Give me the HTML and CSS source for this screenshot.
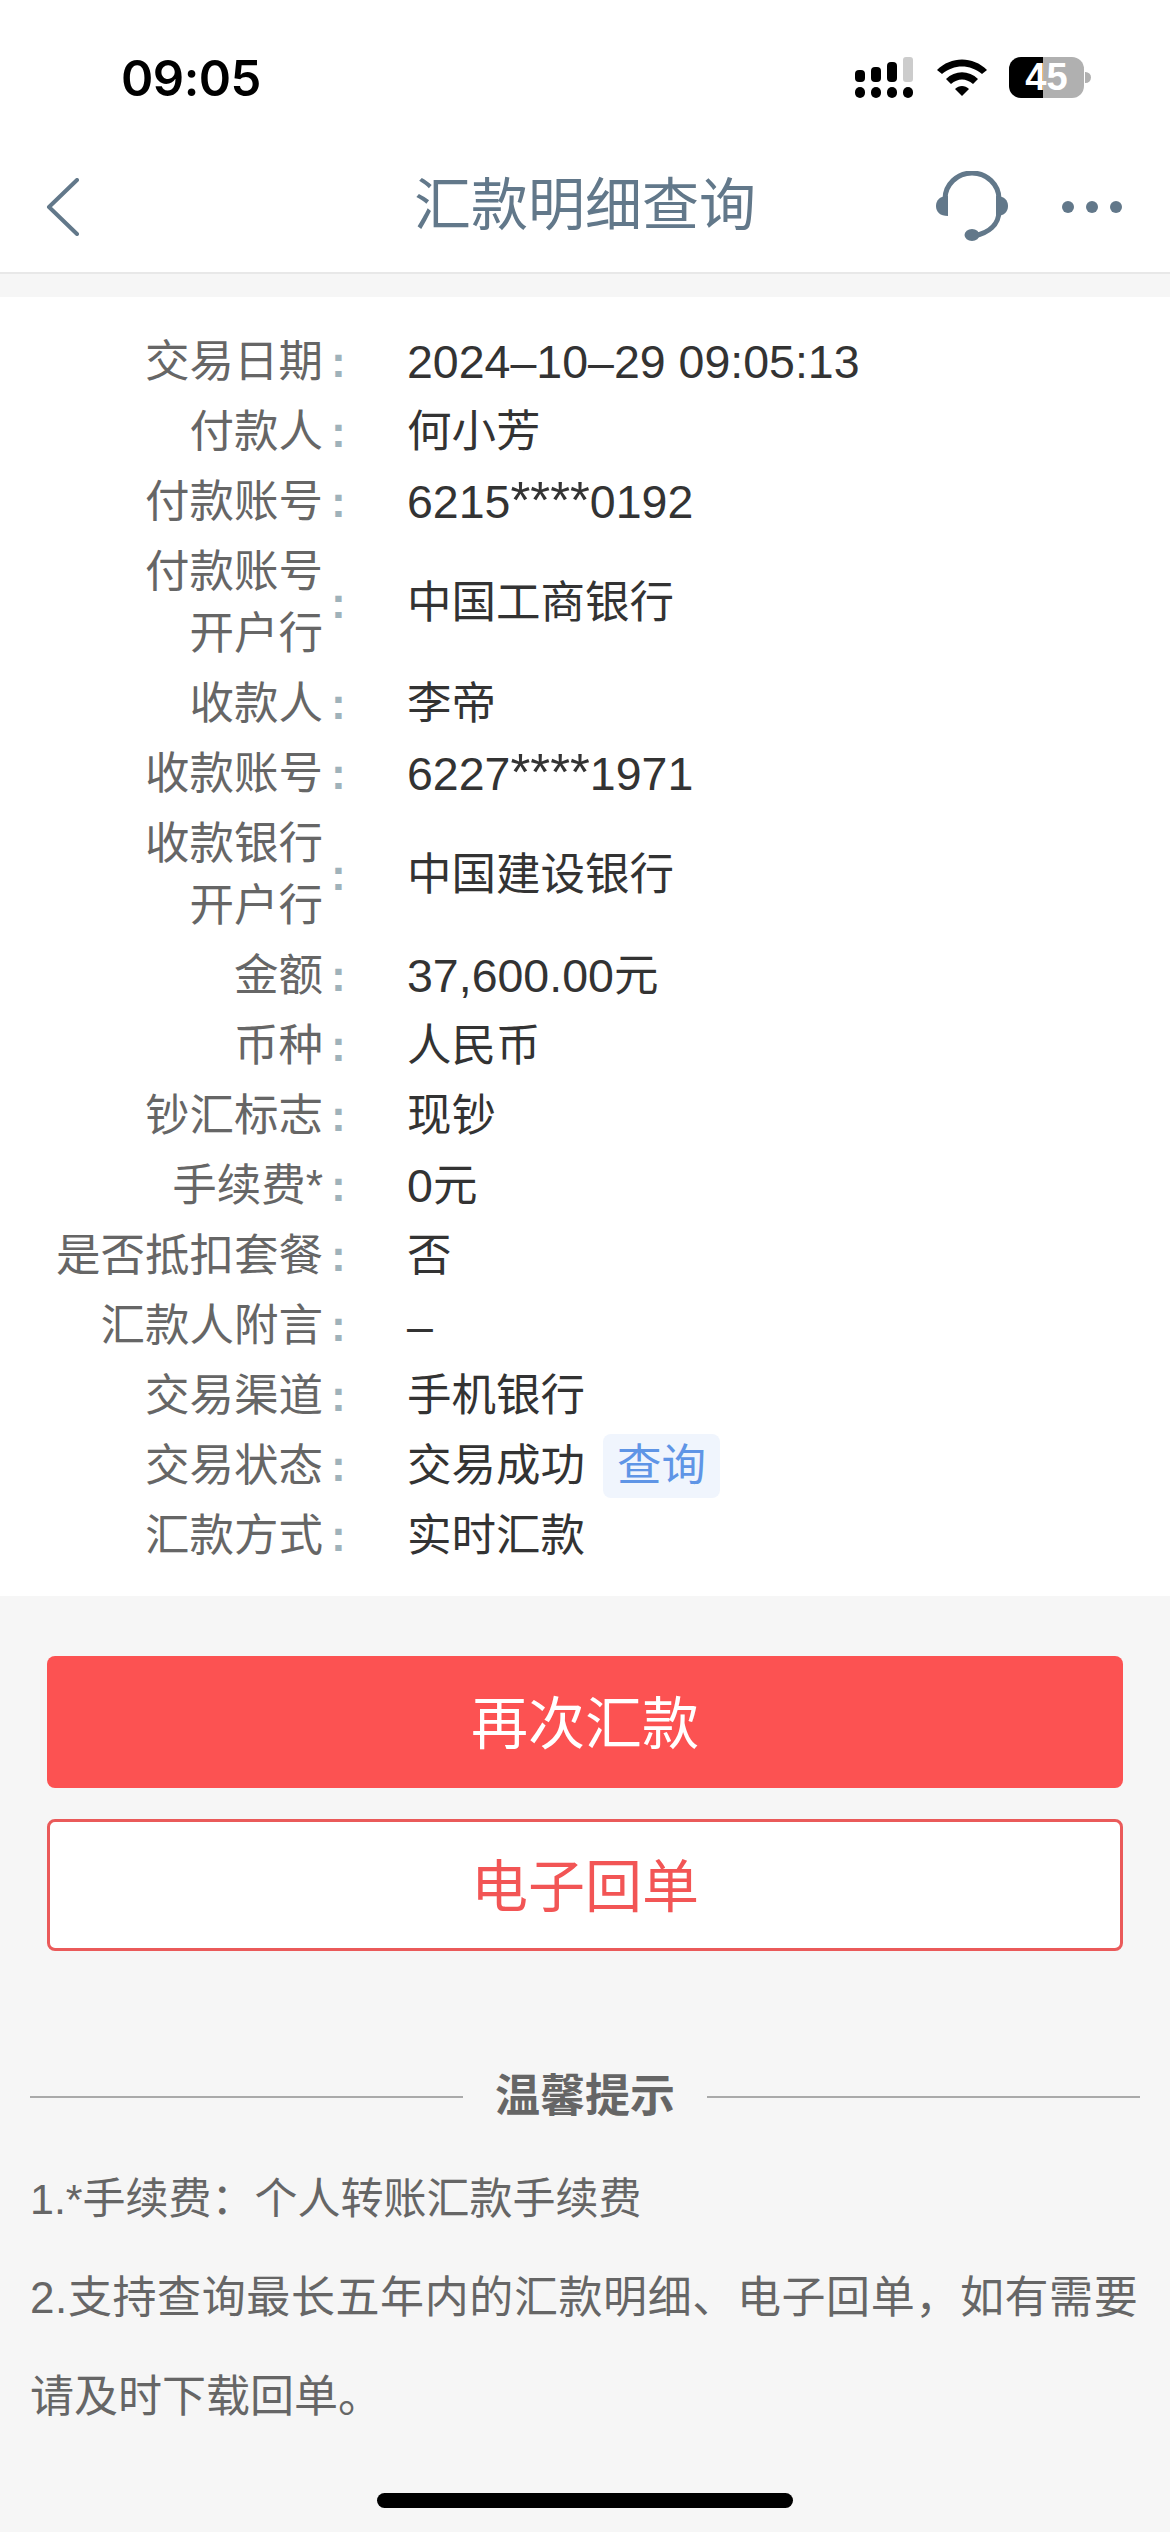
FILE: index.html
```html
<!DOCTYPE html>
<html lang="zh-CN">
<head>
  <meta charset="UTF-8">
  <title>汇款明细查询</title>
  <link rel="stylesheet" href="styles.css">
</head>
<body>

  <header class="top">
    <div class="status">
      <span class="time">09:05</span>
      <div class="status-icons">
        <svg class="signal" width="60" height="42" viewBox="0 0 60 42">
          <rect x="0" y="13" width="10" height="12" rx="4"/>
          <rect x="16" y="10" width="10" height="15" rx="4"/>
          <rect x="32" y="5" width="10" height="20" rx="4"/>
          <rect x="48" y="0" width="10" height="25" rx="3" fill="#ccc"/>
          <rect x="0" y="30" width="10" height="11" rx="5"/>
          <rect x="16" y="30" width="10" height="11" rx="5"/>
          <rect x="32" y="30" width="10" height="11" rx="5"/>
          <rect x="48" y="30" width="10" height="11" rx="5"/>
        </svg>
        <svg class="wifi" width="50" height="38" viewBox="0 0 50 38">
          <path d="M0 11 C14 -3 36 -3 50 11 L45 15 C33 5 17 5 5 15 Z"/>
          <path d="M9 20 C18 11 32 11 41 20 L36 25 C29 19 21 19 14 25 Z"/>
          <path d="M18 30 C22 26 28 26 32 30 L25 37 Z"/>
        </svg>
        <div class="battery"><span>45</span></div>
        <div class="battery-nub"></div>
      </div>
    </div>
    <nav class="nav">
      <svg class="back" width="34" height="58" viewBox="0 0 34 58">
        <path d="M31 2 L3 29 L31 56" fill="none" stroke="#62788a" stroke-width="4" stroke-linecap="round" stroke-linejoin="round"/>
      </svg>
      <h1>汇款明细查询</h1>
      <svg class="headset" width="72" height="72" viewBox="0 0 72 72">
        <path d="M9 28 A27 26 0 0 1 63 28 L63 40 C63 54 52 62 38 65" fill="none" stroke="#62788a" stroke-width="5"/>
        <path d="M12 25 L12 45 C4 45 0 41 0 35 C0 29 4 25 12 25 Z" fill="#62788a"/>
        <path d="M60 25 L60 45 C68 45 72 41 72 35 C72 29 68 25 60 25 Z" fill="#62788a"/>
        <ellipse cx="36" cy="64" rx="7.5" ry="6" fill="#62788a"/>
      </svg>
      <div class="more"><i></i><i></i><i></i></div>
    </nav>
  </header>

  <section class="detail">
    <div class="row"><div class="label">交易日期</div><div class="colon">:</div><div class="value num">2024–10–29 09:05:13</div></div>
    <div class="row"><div class="label">付款人</div><div class="colon">:</div><div class="value">何小芳</div></div>
    <div class="row"><div class="label">付款账号</div><div class="colon">:</div><div class="value num"><span>6215<span class="stars">****</span>0192</span></div></div>
    <div class="row"><div class="label">付款账号<br>开户行</div><div class="colon">:</div><div class="value">中国工商银行</div></div>
    <div class="row"><div class="label">收款人</div><div class="colon">:</div><div class="value">李帝</div></div>
    <div class="row"><div class="label">收款账号</div><div class="colon">:</div><div class="value num"><span>6227<span class="stars">****</span>1971</span></div></div>
    <div class="row"><div class="label">收款银行<br>开户行</div><div class="colon">:</div><div class="value">中国建设银行</div></div>
    <div class="row"><div class="label">金额</div><div class="colon">:</div><div class="value"><span class="num">37,600.00</span>元</div></div>
    <div class="row"><div class="label">币种</div><div class="colon">:</div><div class="value">人民币</div></div>
    <div class="row"><div class="label">钞汇标志</div><div class="colon">:</div><div class="value">现钞</div></div>
    <div class="row"><div class="label">手续费*</div><div class="colon">:</div><div class="value"><span class="num">0</span>元</div></div>
    <div class="row"><div class="label">是否抵扣套餐</div><div class="colon">:</div><div class="value">否</div></div>
    <div class="row"><div class="label">汇款人附言</div><div class="colon">:</div><div class="value num">–</div></div>
    <div class="row"><div class="label">交易渠道</div><div class="colon">:</div><div class="value">手机银行</div></div>
    <div class="row"><div class="label">交易状态</div><div class="colon">:</div><div class="value">交易成功<span class="tag">查询</span></div></div>
    <div class="row"><div class="label">汇款方式</div><div class="colon">:</div><div class="value">实时汇款</div></div>
  </section>

  <section class="actions">
    <button class="btn btn-red">再次汇款</button>
    <button class="btn btn-line">电子回单</button>
  </section>

  <section class="tips">
    <div class="tips-title"><span>温馨提示</span></div>
    <p class="tip-small">1.*手续费：个人转账汇款手续费</p>
    <p><span class="tip-wide">2.支持查询最长五年内的汇款明细、电子回单，如有需要</span><br>请及时下载回单。</p>
  </section>

  <div class="home-bar"></div>

</body>
</html>
```

FILE: styles.css
```css
* {
  box-sizing: border-box;
}
html, body {
  margin: 0;
  padding: 0;
}
body {
  width: 1170px;
  height: 2532px;
  overflow: hidden;
  background: #f6f6f6;
  font-family: "Liberation Sans", "Noto Sans CJK SC", sans-serif;
  color: #333;
}

/* top */
.top {
  height: 274px;
  background: #fff;
  border-bottom: 2px solid #e8e8e8;
}
.status {
  height: 130px;
  display: flex;
  justify-content: space-between;
  padding: 57px 79px 0 121px;
}
.time {
  font-family: Inter, "Liberation Sans", sans-serif;
  font-size: 49px;
  line-height: 43px;
  letter-spacing: -0.5px;
  font-weight: 600;
  color: #000;
}
.status-icons {
  display: flex;
  align-items: flex-start;
}
.wifi {
  margin: 2px 0 0 22px;
}
.battery {
  width: 75px;
  height: 41px;
  margin-left: 22px;
  border-radius: 12px;
  background: linear-gradient(to right, #000 46%, #b0b0b0 46%);
  color: #fff;
  font-size: 38px;
  font-weight: bold;
  line-height: 41px;
  text-align: center;
}
.battery-nub {
  width: 6px;
  height: 11px;
  margin: 15px 0 0 1px;
  border-radius: 0 6px 6px 0;
  background: #b0b0b0;
}
.nav {
  height: 142px;
  display: flex;
  align-items: center;
  padding: 12px 48px 0 46px;
  position: relative;
}
.nav h1 {
  margin: 0;
  position: absolute;
  left: 0;
  right: 0;
  top: 44px;
  text-align: center;
  font-size: 57px;
  line-height: 62px;
  font-weight: normal;
  color: #62788a;
}
.back {
  margin-right: auto;
}
.more {
  display: flex;
  gap: 12px;
  margin-left: 54px;
}
.more i {
  width: 12px;
  height: 12px;
  border-radius: 50%;
  background: #62788a;
}

/* detail */
.detail {
  margin-top: 23px;
  padding: 30px 0 25px;
  background: #fff;
}
.row {
  display: flex;
  align-items: center;
  padding: 4px 0;
  font-size: 44.5px;
  line-height: 62px;
}
.label {
  width: 323px;
  text-align: right;
  color: #666;
}
.colon {
  width: 84px;
  padding-left: 8px;
  color: #9fb2ba;
  font-weight: bold;
}
.value {
  color: #333;
  display: flex;
  align-items: center;
}
.num {
  font-size: 46.5px;
}
.stars {
  font-size: 51px;
  line-height: 0;
}
.tag {
  margin: -1px 0 -1px 18px;
  padding: 1px 14px;
  border-radius: 8px;
  background: #f0f5fd;
  color: #5f95e6;
}

/* buttons */
.actions {
  padding: 60px 47px 0;
  display: flex;
  flex-direction: column;
  gap: 31px;
}
.btn {
  display: block;
  width: 100%;
  height: 132px;
  padding: 0 0 6px;
  border-radius: 8px;
  font-family: inherit;
  font-size: 57px;
  cursor: pointer;
}
.btn-red {
  background: #fc5252;
  border: 0;
  color: #fff;
}
.btn-line {
  background: #fff;
  border: 3px solid #ea5a5a;
  color: #f25555;
}

/* tips */
.tips {
  padding: 115px 30px 0;
  color: #666;
  font-size: 44px;
}
.tips-title {
  display: flex;
  align-items: center;
  gap: 32px;
  font-size: 45px;
  font-weight: bold;
  line-height: 62px;
}
.tips-title span {
  flex: none;
}
.tips-title::before,
.tips-title::after {
  content: "";
  flex: 1;
  height: 2px;
  background: #aaa;
}
.tips p {
  margin: 0;
  line-height: 99px;
  white-space: nowrap;
}
.tips-title + p {
  margin-top: 22px;
  line-height: 98px;
}
.tip-small {
  font-size: 43px;
}
.tip-wide {
  letter-spacing: 0.6px;
}

.home-bar {
  position: absolute;
  left: 377px;
  top: 2493px;
  width: 416px;
  height: 15px;
  border-radius: 8px;
  background: #000;
}
```
